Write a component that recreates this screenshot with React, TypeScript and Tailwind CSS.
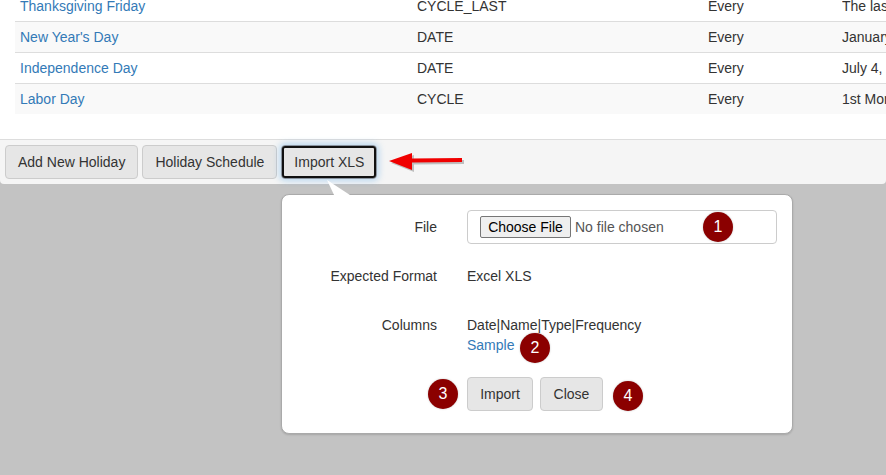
const holidays = [
  { name: "Thanksgiving Friday", type: "CYCLE_LAST", frequency: "Every", description: "The last Friday of November" },
  { name: "New Year's Day", type: "DATE", frequency: "Every", description: "January 1" },
  { name: "Independence Day", type: "DATE", frequency: "Every", description: "July 4, every year" },
  { name: "Labor Day", type: "CYCLE", frequency: "Every", description: "1st Monday of September" },
];

const Badge = ({ label, className }: { label: string; className: string }) => (
  <div
    className={`absolute flex h-[30px] w-[30px] items-center justify-center rounded-full bg-[#8b0000] text-[16px] text-white shadow-[0_0_2px_rgba(0,0,0,0.25)] ${className}`}
  >
    {label}
  </div>
);

const ToolButton = ({ label, className = "" }: { label: string; className?: string }) => (
  <button className={`h-[34px] rounded border border-[#ccc] bg-[#e6e6e6] px-3 text-[#333] ${className}`}>
    {label}
  </button>
);

export default function App() {
  return (
    <div className="flex h-[475px] w-[886px] flex-col overflow-hidden bg-[#c3c3c3] font-['Liberation_Sans',Arial,sans-serif] text-[14px] leading-5 text-[#333]">
      {/* Holiday table, scrolled so the first row is cut off */}
      <div className="h-[139px] overflow-hidden bg-white pl-[15px]">
        <div className="-mt-[9px]">
          {holidays.map((h, i) => (
            <div
              key={h.name}
              className={`flex h-[31px] items-center border-b border-[#ddd] pl-[5px] last:h-[30px] last:border-b-0 ${
                i % 2 === 1 ? "bg-[#f9f9f9]" : "bg-white"
              }`}
            >
              <a className="w-[397px] text-[#337ab7]">{h.name}</a>
              <span className="w-[291px]">{h.type}</span>
              <span className="w-[134px]">{h.frequency}</span>
              <span className="flex-1 overflow-hidden whitespace-nowrap">{h.description}</span>
            </div>
          ))}
        </div>
      </div>

      {/* Toolbar */}
      <div className="relative flex h-[45px] items-center gap-1 rounded-b border-t border-[#ddd] bg-[#f5f5f5] pl-[5px]">
        <ToolButton label="Add New Holiday" />
        <ToolButton label="Holiday Schedule" />
        <ToolButton
          label="Import XLS"
          className="w-[96px] !border-[#8a94a0] !px-0 shadow-[0_0_6px_2px_rgba(102,175,233,0.4)] outline-2 -outline-offset-[3px] outline-[#111]"
        />
        <svg className="absolute left-[388px] top-[10px]" width="80" height="26" viewBox="0 0 80 26">
          <path d="M1 11 L24 3 L24 8.5 L74 8 L74 12 L24 12.5 L24 20 Z" fill="#7f7f7f" opacity="0.45" transform="translate(2 2)" />
          <path d="M1 11 L24 3 L24 8.5 L74 8 L74 12 L24 12.5 L24 20 Z" fill="#f00000" />
        </svg>
      </div>

      {/* Import popover */}
      <div className="relative ml-[281px] mt-[10px] h-[240px] w-[512px] rounded-lg border border-[#aaa] bg-white shadow-[0_1px_2px_rgba(0,0,0,0.15)]">
        <svg className="absolute left-[44px] top-[-15px]" width="26" height="17" viewBox="0 0 26 17">
          <path d="M1 0 L24 15 L24 17 L9 17 Z" fill="#ffffff" />
        </svg>

        <div className="flex pt-[15px]">
          <label className="w-[155px] pt-[7px] text-right">File</label>
          <div className="ml-[30px] flex h-[34px] w-[310px] items-center rounded border border-[#ccc] pl-3">
            <button className="h-[22px] w-[91px] rounded-[2px] border border-[#767676] bg-[#efefef] text-black">
              Choose File
            </button>
            <span className="ml-1 text-[#555]">No file chosen</span>
          </div>
        </div>

        <div className="mt-[22px] flex">
          <label className="w-[155px] text-right">Expected Format</label>
          <span className="ml-[30px]">Excel XLS</span>
        </div>

        <div className="mt-[29px] flex">
          <label className="w-[155px] text-right">Columns</label>
          <div className="ml-[30px]">
            <div>Date|Name|Type|Frequency</div>
            <a className="text-[#337ab7]">Sample</a>
          </div>
        </div>

        <div className="ml-[185px] mt-[22px] flex gap-[7px]">
          <button className="h-[34px] w-[66px] rounded border border-[#ccc] bg-[#e6e6e6] text-[#333]">Import</button>
          <button className="h-[34px] w-[63px] rounded border border-[#ccc] bg-[#e6e6e6] text-[#333]">Close</button>
        </div>

        <Badge label="1" className="left-[421px] top-[17px]" />
        <Badge label="2" className="left-[238px] top-[138px]" />
        <Badge label="3" className="left-[146px] top-[184px]" />
        <Badge label="4" className="left-[331px] top-[186px]" />
      </div>
    </div>
  );
}
